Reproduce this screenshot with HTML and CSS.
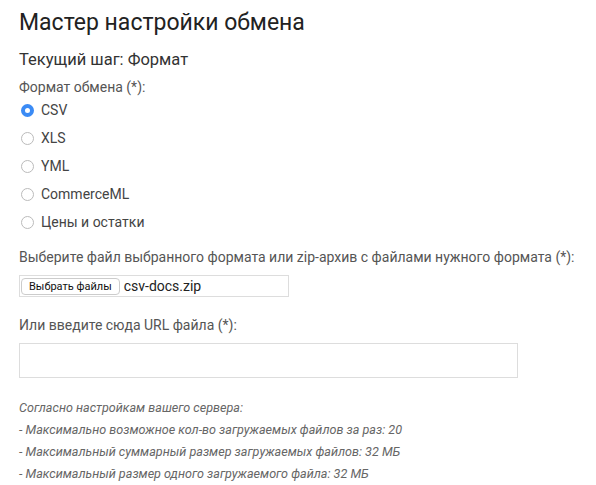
FILE: index.html
```html
<!DOCTYPE html>
<html lang="ru">
<head>
    <meta charset="UTF-8">
    <title>Мастер настройки обмена</title>
    <link rel="stylesheet" href="styles.css">
</head>
<body>
    <div class="wizard">
        <h1 class="wizard-title">Мастер настройки обмена</h1>
        <h2 class="wizard-step">Текущий шаг: Формат</h2>

        <div class="field">
            <div class="field-label">Формат обмена (*):</div>
            <div class="radio-list">
                <label class="radio"><span class="radio-dot checked"></span>CSV</label>
                <label class="radio"><span class="radio-dot"></span>XLS</label>
                <label class="radio"><span class="radio-dot"></span>YML</label>
                <label class="radio"><span class="radio-dot"></span>CommerceML</label>
                <label class="radio"><span class="radio-dot"></span>Цены и остатки</label>
            </div>
        </div>

        <div class="field field-file">
            <div class="field-label">Выберите файл выбранного формата или zip-архив с файлами нужного формата (*):</div>
            <div class="file-box">
                <span class="file-button">Выбрать файлы</span>
                <span class="file-name">csv-docs.zip</span>
            </div>
        </div>

        <div class="field field-url">
            <div class="field-label">Или введите сюда URL файла (*):</div>
            <div class="url-input"></div>
        </div>

        <div class="server-note">
            <div>Согласно настройкам вашего сервера:</div>
            <div>- Максимально возможное кол-во загружаемых файлов за раз: 20</div>
            <div>- Максимальный суммарный размер загружаемых файлов: 32 МБ</div>
            <div>- Максимальный размер одного загружаемого файла: 32 МБ</div>
        </div>
    </div>
</body>
</html>
```

FILE: styles.css
```css
body {
    margin: 0;
    background-color: #fff;
    font-family: Roboto, "Liberation Sans", sans-serif;
    color: #555;
}
.wizard {
    padding: 8px 18px 0 19px;
}
.wizard-title {
    margin: 0;
    font-size: 23px;
    font-weight: 400;
    line-height: 30px;
    color: #222;
}
.wizard-step {
    margin: 12px 0 0;
    font-size: 16.5px;
    font-weight: 400;
    line-height: 20px;
    color: #333;
}
.field {
    margin-top: 8px;
}
.field-label {
    font-size: 14px;
    line-height: 18px;
    color: #555;
}
.radio-list {
    display: flex;
    flex-direction: column;
}
.radio {
    display: flex;
    align-items: center;
    height: 28px;
    font-size: 14px;
    color: #444;
}
.radio-dot {
    width: 13px;
    height: 13px;
    margin: 0 7px 0 2px;
    border: 1px solid #bbb;
    border-radius: 50%;
    box-sizing: border-box;
    background-color: #fff;
}
.radio-dot.checked {
    border: 4px solid #3b8bf5;
}
.field-file {
    margin-top: 12px;
}
.file-box {
    display: flex;
    align-items: center;
    gap: 4px;
    width: 270px;
    height: 22px;
    margin-top: 9px;
    border: 1px solid #ddd;
    box-sizing: border-box;
}
.file-button {
    padding: 1px 7px;
    margin-left: 1px;
    border: 1px solid #ccc;
    border-radius: 4px;
    background-color: #fff;
    font-size: 11px;
    color: #111;
}
.file-name {
    font-size: 14px;
    color: #222;
}
.field-url {
    margin-top: 19px;
}
.url-input {
    width: 499px;
    height: 35px;
    margin-top: 9px;
    border: 1px solid #ddd;
    box-sizing: border-box;
}
.server-note {
    margin-top: 19px;
    font-size: 12.6px;
    font-style: italic;
    line-height: 22px;
    color: #666;
}
```
